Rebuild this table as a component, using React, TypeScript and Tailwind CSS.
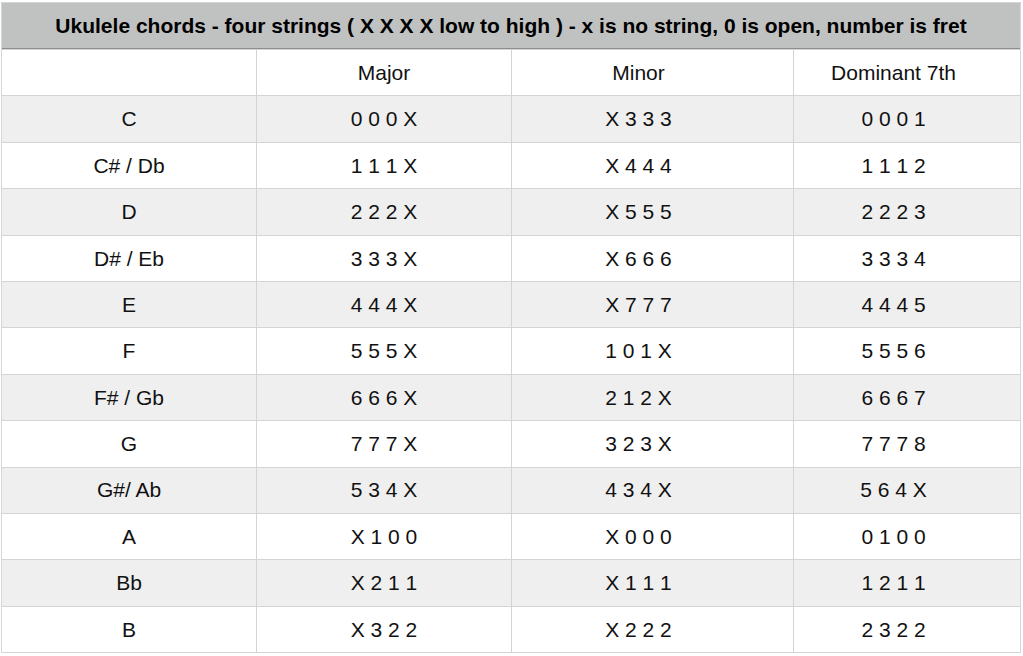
const rows: [string, string, string, string][] = [
  ["C", "0 0 0 X", "X 3 3 3", "0 0 0 1"],
  ["C# / Db", "1 1 1 X", "X 4 4 4", "1 1 1 2"],
  ["D", "2 2 2 X", "X 5 5 5", "2 2 2 3"],
  ["D# / Eb", "3 3 3 X", "X 6 6 6", "3 3 3 4"],
  ["E", "4 4 4 X", "X 7 7 7", "4 4 4 5"],
  ["F", "5 5 5 X", "1 0 1 X", "5 5 5 6"],
  ["F# / Gb", "6 6 6 X", "2 1 2 X", "6 6 6 7"],
  ["G", "7 7 7 X", "3 2 3 X", "7 7 7 8"],
  ["G#/ Ab", "5 3 4 X", "4 3 4 X", "5 6 4 X"],
  ["A", "X 1 0 0", "X 0 0 0", "0 1 0 0"],
  ["Bb", "X 2 1 1", "X 1 1 1", "1 2 1 1"],
  ["B", "X 3 2 2", "X 2 2 2", "2 3 2 2"],
];

const cellClass = [
  "flex items-center justify-center",
  "flex items-center justify-center border-l border-[#d4d4d4]",
  "flex items-center justify-center border-l border-[#d4d4d4] pr-[28px]",
  "flex items-center justify-center border-l border-[#d4d4d4] pr-[27px]",
];

function Row({ cells, shaded }: { cells: string[]; shaded: boolean }) {
  return (
    <div
      className={`grid grid-cols-[254px_255px_282px_1fr] h-[46.4px] border-t border-[#d4d4d4] ${
        shaded ? "bg-[#efefef]" : "bg-white"
      }`}
    >
      {cells.map((c, i) => (
        <div key={i} className={cellClass[i]}>
          {c}
        </div>
      ))}
    </div>
  );
}

export default function App() {
  return (
    <div className="w-[1023px] h-[656px] bg-white pt-[2px] pl-[1px] font-['Liberation_Sans',Arial,sans-serif] text-[21px] text-[#111]">
      <div className="w-[1020px] border border-[#d6d6d6]">
        <div className="h-[46px] bg-[#c0c2c1] border-b border-[#8e8e8e] flex items-center justify-center font-bold text-[21px] text-black">
          Ukulele chords - four strings ( X X X X low to high ) - x is no string, 0 is open, number is fret
        </div>
        <Row cells={["", "Major", "Minor", "Dominant 7th"]} shaded={false} />
        {rows.map((r, i) => (
          <Row key={i} cells={r} shaded={i % 2 === 0} />
        ))}
      </div>
    </div>
  );
}
